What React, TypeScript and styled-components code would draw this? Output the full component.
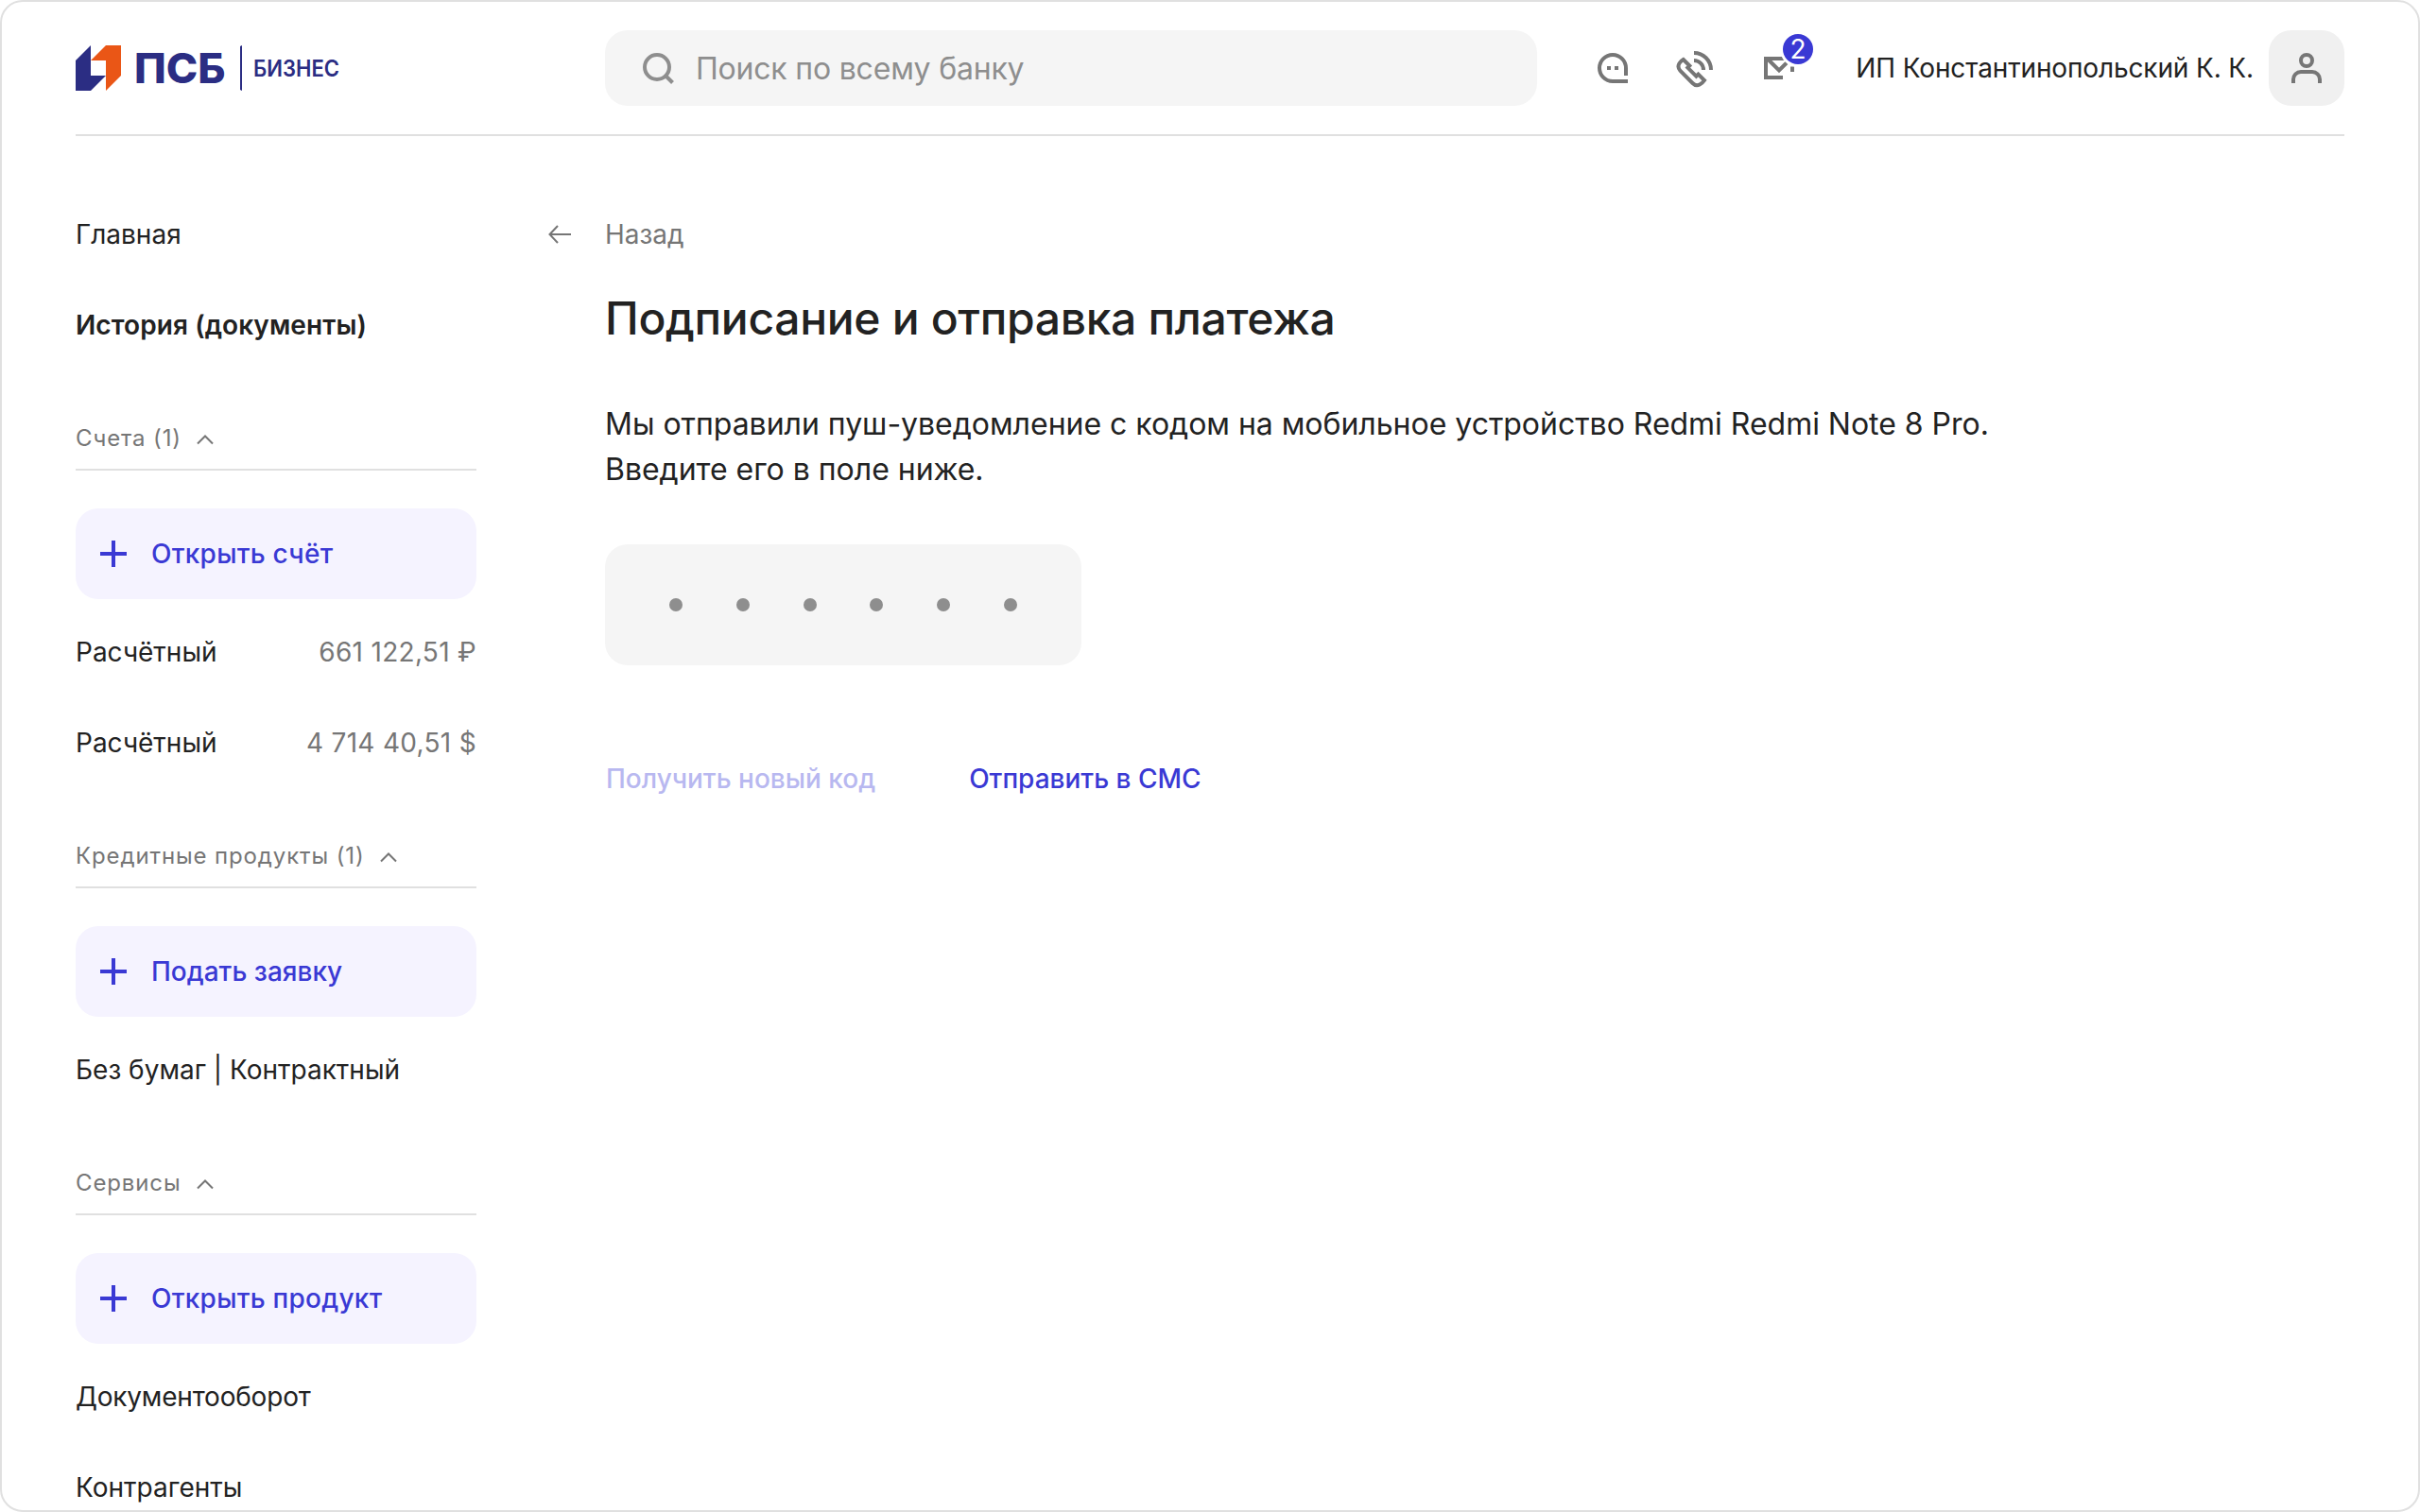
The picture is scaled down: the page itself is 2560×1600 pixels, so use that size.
import React from "react";
import styled, { createGlobalStyle, css } from "styled-components";

const color = {
  text: "#222222",
  muted: "#767676",
  hint: "#8e8e8e",
  line: "#e0e0e0",
  field: "#f5f5f5",
  accent: "#3a39d4",
  accentSoft: "#f5f3ff",
  accentFaded: "#b8b8f0",
  brand: "#2b2d83",
  brandHot: "#ea5616",
};

const GlobalStyle = createGlobalStyle`
  *, *::before, *::after { box-sizing: border-box; }
  html, body { margin: 0; background: #fff; }
  body {
    font-family: Inter, "Liberation Sans", sans-serif;
    font-size: 28px;
    line-height: 40px;
    color: ${color.text};
  }
  button, input { font: inherit; color: inherit; border: 0; padding: 0; background: none; text-align: left; }
  a { color: inherit; text-decoration: none; }
  svg { display: block; flex: none; overflow: visible; }
`;

const Window = styled.div`
  width: 2560px;
  height: 1600px;
  overflow: hidden;
  border: 2px solid ${color.line};
  border-radius: 24px;
  background: #fff;
  padding: 0 78px;
`;

const Header = styled.header`
  display: flex;
  align-items: center;
  height: 142px;
  border-bottom: 2px solid ${color.line};
`;

const LogoLink = styled.a`
  width: 560px;
`;

const SearchBox = styled.label`
  display: flex;
  align-items: center;
  gap: 23px;
  width: 986px;
  height: 80px;
  padding-left: 40px;
  border-radius: 24px;
  background: ${color.field};
  color: ${color.hint};
  font-size: 32px;
`;

const SearchInput = styled.input`
  flex: 1;
  min-width: 0;
  padding-top: 2px;
  outline: none;
  letter-spacing: -0.2px;
  &::placeholder { color: ${color.hint}; opacity: 1; }
`;

const Actions = styled.nav`
  display: flex;
  align-items: center;
  gap: 40px;
  margin-left: 56px;
  color: ${color.muted};
`;

const ActionButton = styled.button`
  position: relative;
  width: 48px;
  height: 48px;
`;

const Badge = styled.span`
  position: absolute;
  top: -12px;
  left: 28px;
  width: 32px;
  height: 32px;
  border-radius: 50%;
  box-shadow: 0 0 0 3px #fff;
  background: ${color.accent};
  color: #fff;
  font-size: 28px;
  line-height: 32px;
  text-align: center;
`;

const UserName = styled.span`
  margin-left: auto;
  margin-right: 16px;
  letter-spacing: -0.13px;
  white-space: nowrap;
`;

const Avatar = styled.button`
  display: grid;
  place-items: center;
  width: 80px;
  height: 80px;
  border-radius: 24px;
  background: #f0f0f0;
  color: ${color.muted};
`;

const Body = styled.div`
  display: flex;
  gap: 76px;
  padding-top: 56px;
`;

const Sidebar = styled.aside`
  width: 424px;
  flex: none;
`;

const NavItem = styled.a<{ $active?: boolean; $tracking?: number }>`
  display: flex;
  align-items: center;
  justify-content: space-between;
  height: 96px;
  white-space: nowrap;
  letter-spacing: ${(p) => p.$tracking ?? 0}px;
  ${(p) => p.$active && css`font-weight: 600;`}
`;

const Amount = styled.span`
  color: ${color.muted};
  letter-spacing: 0.3px;
`;

const Group = styled.section`
  padding-top: 40px;
`;

const GroupTitle = styled.button`
  display: flex;
  align-items: center;
  gap: 15px;
  width: 100%;
  height: 66px;
  margin-bottom: 40px;
  border-bottom: 2px solid ${color.line};
  color: ${color.muted};
  font-size: 24px;
  letter-spacing: 0.88px;
`;

const AddButton = styled.button<{ $tracking?: number }>`
  display: flex;
  align-items: center;
  gap: 26px;
  width: 100%;
  height: 96px;
  margin-bottom: 8px;
  padding-left: 26px;
  border-radius: 24px;
  background: ${color.accentSoft};
  color: ${color.accent};
  font-weight: 500;
  letter-spacing: ${(p) => p.$tracking ?? 0}px;
`;

const Main = styled.main`
  flex: 1;
`;

const BackLink = styled.a`
  display: flex;
  align-items: center;
  gap: 36px;
  height: 96px;
  color: ${color.muted};
`;

const Content = styled.div`
  padding-left: 60px;
`;

const Title = styled.h1`
  margin: 9px 0 56px;
  font-size: 48px;
  font-weight: 500;
  line-height: 64px;
  letter-spacing: -0.32px;
`;

const Message = styled.p`
  margin: 0 0 55px;
  font-size: 32px;
  line-height: 48px;
  letter-spacing: -0.02px;
`;

const CodeField = styled.div`
  display: flex;
  align-items: center;
  justify-content: space-between;
  width: 504px;
  height: 128px;
  padding: 0 68px;
  border-radius: 24px;
  background: ${color.field};
`;

const Dot = styled.span`
  width: 14px;
  height: 14px;
  border-radius: 50%;
  background: ${color.hint};
`;

const Links = styled.div`
  display: flex;
  gap: 99px;
  margin-top: 100px;
  padding-left: 1px;
  font-weight: 500;
`;

const LinkButton = styled.button<{ $disabled?: boolean }>`
  color: ${(p) => (p.$disabled ? color.accentFaded : color.accent)};
`;

const Logo = () => (
  <svg width="280" height="48" viewBox="0 0 280 48">
    <path d="M0 16 16 0V32H32L16 48H0Z" fill={color.brand} />
    <path d="M16 16 32 0H48V32L32 48V16Z" fill={color.brandHot} />
    <g fill={color.brand} fontFamily="Inter, sans-serif">
      <text x="62" y="40" fontSize="44" fontWeight="800" textLength="96.5" lengthAdjust="spacingAndGlyphs">ПСБ</text>
      <text x="188" y="33" fontSize="24" fontWeight="600" textLength="91" lengthAdjust="spacingAndGlyphs">БИЗНЕС</text>
    </g>
    <path d="M174 1 176 0V48L174 47Z" fill={color.brand} />
  </svg>
);

const SearchIcon = () => (
  <svg width="33" height="33" viewBox="0 0 33 33" fill="none" stroke="currentColor" strokeWidth="4">
    <circle cx="15" cy="15" r="13" />
    <path d="M24 24 31.5 31.5" />
  </svg>
);

const ChatIcon = () => (
  <svg width="48" height="48" viewBox="0 0 48 48" fill="none" stroke="currentColor" strokeWidth="4">
    <path d="M38 32V24A14 14 0 1 0 24 38H40" />
    <path d="M18 24H22M26 24H30" />
  </svg>
);

const PhoneIcon = () => (
  <svg width="48" height="48" viewBox="0 0 48 48" fill="none" stroke="currentColor" strokeWidth="4">
    <path d="M10.7 15 17.3 21.6 15.3 23.6 24.4 32.7 26.5 30.6 33 37Q31 40 28 41.5Q24 43.5 20.5 40L7.5 27Q4 23 6.5 19Q8 16.5 10.7 15Z" />
    <path d="M22 8A18 18 0 0 1 40 26M22 16A10 10 0 0 1 32 26" />
  </svg>
);

const MailIcon = () => (
  <svg width="48" height="48" viewBox="0 0 48 48" fill="none" stroke="currentColor" strokeWidth="4">
    <path d="M30 14H10V34H28" />
    <path d="M12.5 15 24 26.5 32 18.5" />
    <path d="M38 22.5V28" />
  </svg>
);

const UserIcon = () => (
  <svg width="32" height="32" viewBox="0 0 32 32" fill="none" stroke="currentColor" strokeWidth="4">
    <circle cx="16" cy="8" r="6" />
    <path d="M2 32V28A8 8 0 0 1 10 20H22A8 8 0 0 1 30 28V32" />
  </svg>
);

const ArrowIcon = () => (
  <svg width="24" height="20" viewBox="0 0 24 20" fill="none" stroke="currentColor" strokeWidth="2">
    <path d="M24 10H1.5M10 1 1.5 10 10 19" />
  </svg>
);

const PlusIcon = () => (
  <svg width="28" height="28" viewBox="0 0 28 28" stroke="currentColor" strokeWidth="4">
    <path d="M14 0V28M0 14H28" />
  </svg>
);

const ChevronIcon = () => (
  <svg width="20" height="14" viewBox="0 0 20 14" fill="none" stroke="currentColor" strokeWidth="2">
    <path d="M2 12.5 10 4.5 18 12.5" />
  </svg>
);

type Item = { label: string; amount?: string; tracking?: number };
type GroupData = { title: string; action: string; actionTracking?: number; items: Item[] };

const groups: GroupData[] = [
  {
    title: "Счета (1)",
    action: "Открыть счёт",
    actionTracking: 0.25,
    items: [
      { label: "Расчётный", amount: "661 122,51 ₽" },
      { label: "Расчётный", amount: "4 714 40,51 $" },
    ],
  },
  {
    title: "Кредитные продукты (1)",
    action: "Подать заявку",
    items: [{ label: "Без бумаг | Контрактный" }],
  },
  {
    title: "Сервисы",
    action: "Открыть продукт",
    actionTracking: 0.25,
    items: [{ label: "Документооборот", tracking: -0.2 }, { label: "Контрагенты" }],
  },
];

export default function App() {
  return (
    <>
      <GlobalStyle />
      <Window>
        <Header>
          <LogoLink><Logo /></LogoLink>
          <SearchBox>
            <SearchIcon />
            <SearchInput placeholder="Поиск по всему банку" />
          </SearchBox>
          <Actions>
            <ActionButton><ChatIcon /></ActionButton>
            <ActionButton><PhoneIcon /></ActionButton>
            <ActionButton><MailIcon /><Badge>2</Badge></ActionButton>
          </Actions>
          <UserName>ИП Константинопольский К. К.</UserName>
          <Avatar><UserIcon /></Avatar>
        </Header>
        <Body>
          <Sidebar>
            <NavItem>Главная</NavItem>
            <NavItem $active $tracking={0.08}>История (документы)</NavItem>
            {groups.map((g) => (
              <Group key={g.title}>
                <GroupTitle>{g.title}<ChevronIcon /></GroupTitle>
                <AddButton $tracking={g.actionTracking}><PlusIcon />{g.action}</AddButton>
                {g.items.map((it, i) => (
                  <NavItem key={i} $tracking={it.tracking}>
                    {it.label}
                    {it.amount && <Amount>{it.amount}</Amount>}
                  </NavItem>
                ))}
              </Group>
            ))}
          </Sidebar>
          <Main>
            <BackLink><ArrowIcon />Назад</BackLink>
            <Content>
              <Title>Подписание и отправка платежа</Title>
              <Message>
                Мы отправили пуш-уведомление с кодом на мобильное устройство Redmi Redmi Note 8 Pro.
                <br />
                Введите его в поле ниже.
              </Message>
              <CodeField>
                {Array.from({ length: 6 }, (_, i) => <Dot key={i} />)}
              </CodeField>
              <Links>
                <LinkButton $disabled>Получить новый код</LinkButton>
                <LinkButton>Отправить в СМС</LinkButton>
              </Links>
            </Content>
          </Main>
        </Body>
      </Window>
    </>
  );
}
